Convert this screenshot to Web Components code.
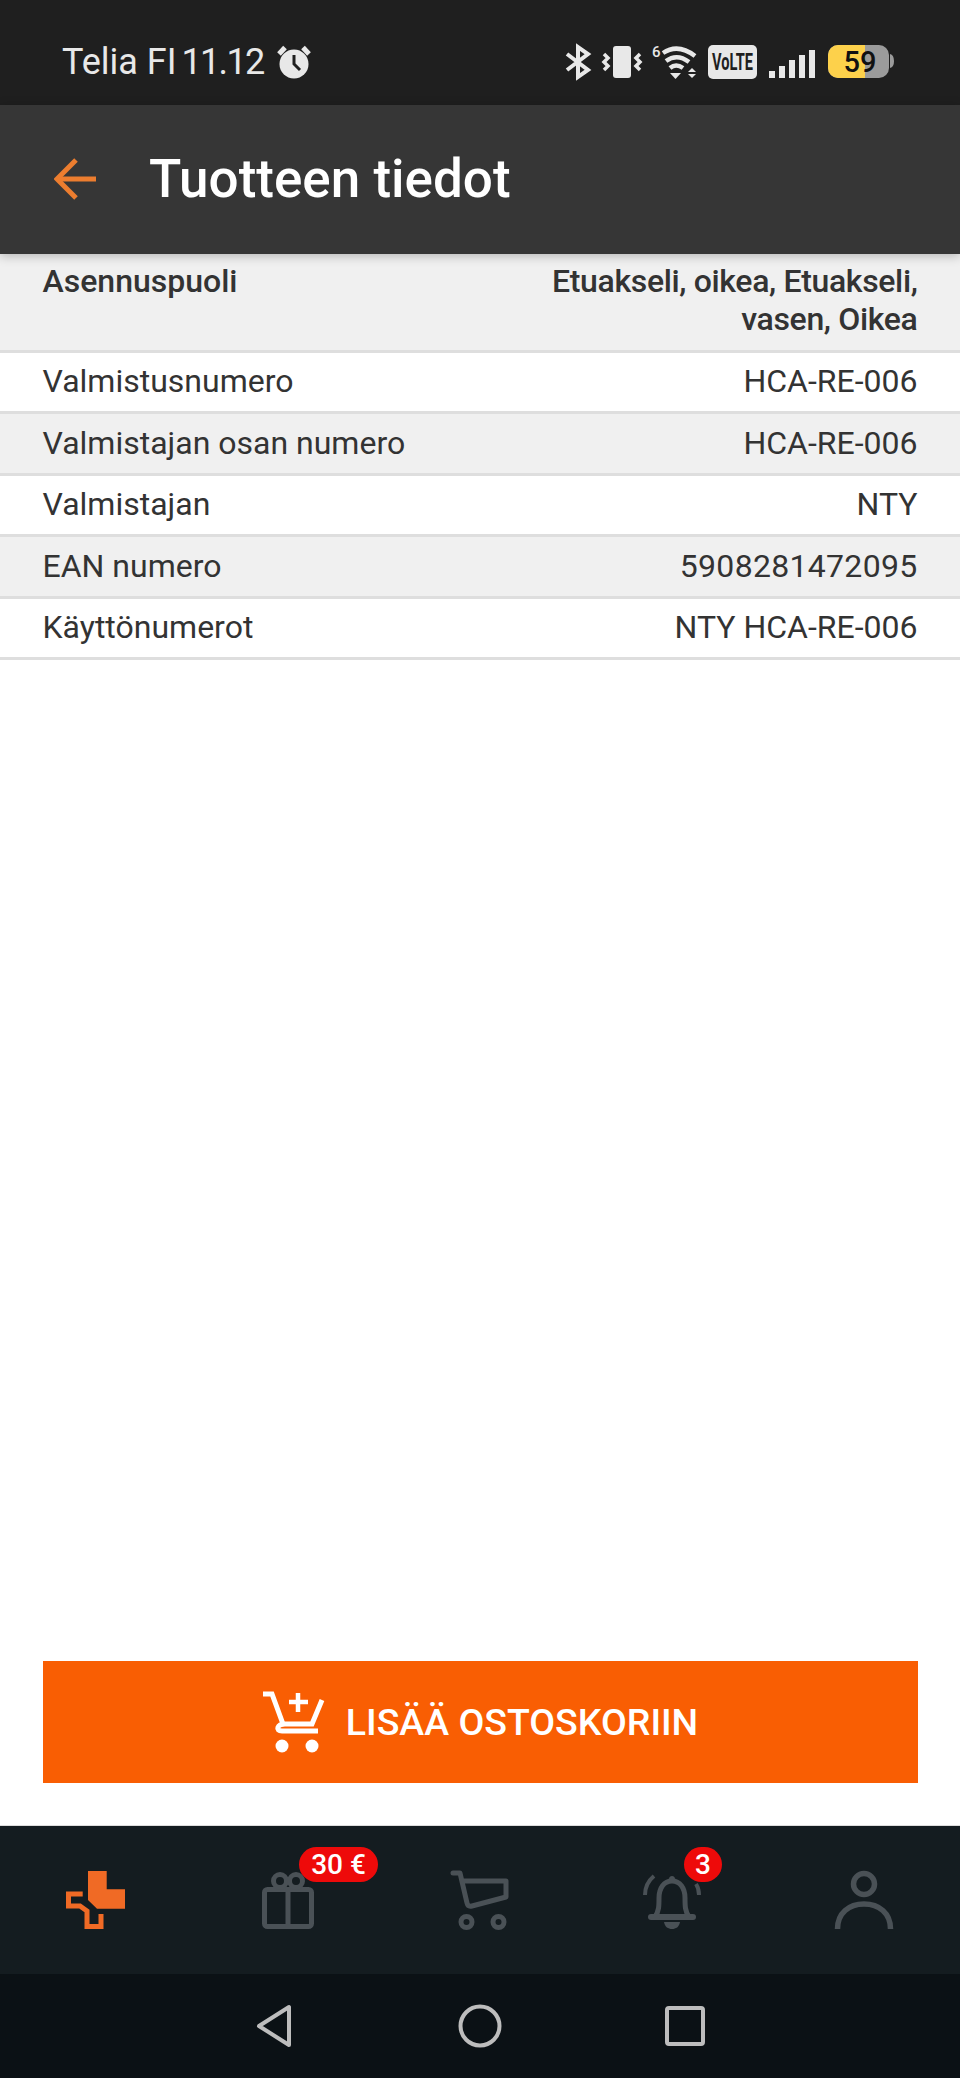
<!DOCTYPE html>
<html lang="fi">
<head>
<meta charset="utf-8">
<title>Tuotteen tiedot</title>
<style>
	html, body { margin: 0; padding: 0; background: #fff; }
	body { font-family: Roboto, "Liberation Sans", sans-serif; }
	#page { display: flex; flex-direction: column; height: 2078px; width: 960px; overflow: hidden; }
	.ean { letter-spacing: .3px; }
</style>
</head>
<body>
<div id="page">
	<status-bar></status-bar>
	<app-bar>Tuotteen tiedot</app-bar>
	<spec-table>
		<spec-row strong tall><span slot="label">Asennuspuoli</span>Etuakseli, oikea, Etuakseli,<br>vasen, Oikea</spec-row>
		<spec-row><span slot="label">Valmistusnumero</span>HCA-RE-006</spec-row>
		<spec-row alt><span slot="label">Valmistajan osan numero</span>HCA-RE-006</spec-row>
		<spec-row><span slot="label">Valmistajan</span>NTY</spec-row>
		<spec-row alt><span slot="label">EAN numero</span><span class="ean">5908281472095</span></spec-row>
		<spec-row><span slot="label">Käyttönumerot</span>NTY HCA-RE-006</spec-row>
	</spec-table>
	<add-to-cart>LISÄÄ OSTOSKORIIN</add-to-cart>
	<bottom-nav>
		<nav-item>
			<svg viewBox="0 0 60 60" width="60" height="60">
				<path fill="#f06a25" d="M22 1H40.7V19.3H59V38.7H31L22 30Z"/>
				<path fill="none" stroke="#f06a25" stroke-width="5" d="M16.7 24H2.5V36H14L21 41V56.5H35V44"/>
			</svg>
		</nav-item>
		<nav-item badge="30 €" badge-left="41" badge-width="79">
			<svg viewBox="0 0 60 60" width="60" height="60" fill="none" stroke="#4a5156" stroke-width="5">
				<rect x="6.5" y="19.5" width="47" height="37" rx="3"/>
				<path d="M30 19V57"/>
				<circle cx="22" cy="11" r="6.5"/>
				<circle cx="38" cy="11" r="6.5"/>
			</svg>
		</nav-item>
		<nav-item>
			<svg viewBox="0 0 60 60" width="60" height="60" fill="none" stroke="#4a5156" stroke-width="5">
				<path stroke-linecap="round" d="M3 3H10L17 33Q18 37 22 36L56 27V11H13" stroke-linejoin="round"/>
				<circle cx="16.5" cy="52" r="5.5"/>
				<circle cx="48.5" cy="52" r="5.5"/>
			</svg>
		</nav-item>
		<nav-item badge="3" badge-left="42" badge-width="38">
			<svg viewBox="0 0 60 60" width="60" height="60" fill="none" stroke="#4a5156" stroke-width="5">
				<path d="M13 47C17 41 17 36 17 28C17 18 22 11 30 11C38 11 43 18 43 28C43 36 43 41 47 47"/>
				<path stroke-linecap="round" stroke-width="6" d="M9 47H51"/>
				<path fill="#4a5156" stroke="none" d="M22 52H38C37 57 34 59 30 59C26 59 23 57 22 52Z"/>
				<path fill="#4a5156" stroke="none" d="M27 9C27 5 33 5 33 9Z"/>
				<path stroke-width="4" d="M3 25C3 17 6 11 12 6"/>
				<path stroke-width="4" d="M57 25C57 20 56 17 54 14"/>
			</svg>
		</nav-item>
		<nav-item>
			<svg viewBox="0 0 60 60" width="60" height="60" fill="none" stroke="#4a5156" stroke-width="5.5">
				<circle cx="30" cy="14" r="10.5"/>
				<path d="M3.5 59C3.5 43 15 34 30 34C45 34 56.500 43 56.500 59"/>
			</svg>
		</nav-item>
	</bottom-nav>
	<system-nav></system-nav>
</div>

<script>
class statusBar extends HTMLElement {

	constructor() {

		super();

		this.attachShadow( { mode: 'open' } ).innerHTML = `
			<style>
				:host {
					display: flex;
					align-items: center;
					flex: none;
					height: 105px;
					padding: 18px 66px 0 62px;
					box-sizing: border-box;
					background: #1f1f1f;
					color: #e8e8e8;
					font-family: Roboto, sans-serif;
					font-size: 36px;
				}
				.carrier { margin-right: 5px; }
				.time { margin-right: 14px; letter-spacing: -1.7px; }
				.left, .right { display: flex; align-items: center; }
				.right { margin-left: auto; }
				svg { display: block; overflow: visible; }
				.gap-9 { margin-left: 9px; }
				.gap-11 { margin-left: 11px; }
				.gap-12 { margin-left: 12px; }
				.gap-13 { margin-left: 13px; }
			</style>
			<div class="left">
				<span class="carrier">Telia FI</span>
				<span class="time">11.12</span>
				<svg width="34" height="34" viewBox="0 0 34 34">
					<circle cx="17" cy="19" r="14.5" fill="#e8e8e8"/>
					<path d="M17 10V19L23 25" fill="none" stroke="#1f1f1f" stroke-width="3"/>
					<path d="M2 9L8 2.500" stroke="#e8e8e8" stroke-width="5" fill="none"/>
					<path d="M32 9L26 2.500" stroke="#e8e8e8" stroke-width="5" fill="none"/>
				</svg>
			</div>
			<div class="right">
				<svg width="26" height="34" viewBox="0 0 26 34" fill="none" stroke="#e8e8e8" stroke-width="4">
					<path d="M2 9L23 25L13 32V2L23 9L2 25"/>
				</svg>
				<svg class="gap-11" width="41" height="34" viewBox="0 0 41 34" fill="none" stroke="#e8e8e8" stroke-width="3.500">
					<rect x="11" y="1" width="18" height="32" rx="3" fill="#e8e8e8" stroke="none"/>
					<path d="M2 9L6 13L2 17L6 21L2 25"/>
					<path d="M38 9L34 13L38 17L34 21L38 25"/>
				</svg>
				<svg class="gap-9" width="45" height="34" viewBox="0 0 45 34" fill="none" stroke="#e8e8e8" stroke-width="4.500">
					<path d="M11 8Q26 -2 43 11"/>
					<path d="M14 16Q25 8 37 17"/>
					<path d="M18 23Q24 18 31 23"/>
					<path d="M18 28H29L23.500 34Z" fill="#e8e8e8" stroke="none"/>
					<path d="M36 27L40 23L44 27Z M36 29L40 33L44 29Z" fill="#e8e8e8" stroke="none"/>
					<text x="0" y="12" fill="#e8e8e8" stroke="none" font-family="Roboto, sans-serif" font-size="15" font-weight="500">6</text>
				</svg>
				<svg class="gap-11" width="49" height="34" viewBox="0 0 49 34">
					<rect width="49" height="34" rx="5" fill="#e8e8e8"/>
					<text x="4" y="25" textLength="41" lengthAdjust="spacingAndGlyphs" font-family="Roboto, sans-serif" font-size="23" font-weight="700" fill="#1f1f1f">VoLTE</text>
				</svg>
				<svg class="gap-12" width="46" height="34" viewBox="0 0 46 34" fill="#e8e8e8">
					<rect x="0" y="26" width="6" height="7"/>
					<rect x="10" y="21" width="6" height="12"/>
					<rect x="20" y="15" width="6" height="18"/>
					<rect x="30" y="10" width="6" height="23"/>
					<rect x="40" y="5" width="6" height="28"/>
				</svg>
				<svg class="gap-13" width="66" height="34" viewBox="0 0 66 34">
					<rect x="0" y="0" width="61" height="33" rx="10" fill="#9b9b9b"/>
					<path d="M37 0H10A10 10 0 0 0 0 10V23A10 10 0 0 0 10 33H37Z" fill="#fdd14b"/>
					<path d="M62 9Q66 10 66 16Q66 22 62 23Z" fill="#9b9b9b"/>
					<text x="32" y="27" text-anchor="middle" font-family="Roboto, sans-serif" font-size="29" font-weight="500" fill="#111">59</text>
				</svg>
			</div>
		`;

	}

}

window.customElements.define( 'status-bar', statusBar );

class appBar extends HTMLElement {

	constructor() {

		super();

		this.attachShadow( { mode: 'open' } ).innerHTML = `
			<style>
				:host {
					display: flex;
					align-items: center;
					flex: none;
					position: relative;
					z-index: 1;
					height: 149px;
					padding: 0 0 2px 54px;
					box-sizing: border-box;
					background: #363636;
					color: #fff;
					font-family: Roboto, sans-serif;
					font-size: 53px;
					font-weight: 500;
					box-shadow: 0 2px 10px rgba(0,0,0,.25);
				}
				svg { display: block; margin-right: 53px; }
			</style>
			<svg width="42" height="42" viewBox="0 0 42 42" fill="none" stroke="#ec7d2f" stroke-width="5">
				<path d="M42 21H4"/>
				<path d="M22 2L3 21L22 40"/>
			</svg>
			<slot></slot>
		`;

	}

}

window.customElements.define( 'app-bar', appBar );

class specTable extends HTMLElement {

	constructor() {

		super();

		this.attachShadow( { mode: 'open' } ).innerHTML = `
			<style>
				:host {
					display: block;
					flex: 1;
					min-height: 0;
				}
			</style>
			<slot></slot>
		`;

	}

}

window.customElements.define( 'spec-table', specTable );

class specRow extends HTMLElement {

	constructor() {

		super();

		this.attachShadow( { mode: 'open' } ).innerHTML = `
			<style>
				:host {
					display: flex;
					justify-content: space-between;
					box-sizing: border-box;
					height: 61.5px;
					padding: 9.5px 42.5px 0;
					background: #fff;
					border-bottom: 3px solid #dedede;
					color: #333;
					font-family: Roboto, sans-serif;
					font-size: 32px;
					line-height: 38px;
				}
				:host([alt]) { background: #f0f0f0; }
				:host([strong]) { font-weight: 500; background: #f0f0f0; }
				:host([strong]) .value { letter-spacing: -.35px; }
				:host([tall]) { height: 98.5px; padding-top: 8px; }
				.value { text-align: right; }
			</style>
			<div class="label"><slot name="label"></slot></div>
			<div class="value"><slot></slot></div>
		`;

	}

}

window.customElements.define( 'spec-row', specRow );

class addToCart extends HTMLElement {

	constructor() {

		super();

		this.attachShadow( { mode: 'open' } ).innerHTML = `
			<style>
				:host {
					display: block;
					flex: none;
					padding: 0 42.5px 42px;
				}
				button {
					display: flex;
					align-items: center;
					justify-content: center;
					width: 100%;
					height: 122px;
					padding: 0;
					border: 0;
					background: #f95e03;
					color: #fff;
					font-family: Roboto, sans-serif;
					font-size: 37.5px;
					font-weight: 500;
				}
				svg { display: block; margin-right: 20px; }
			</style>
			<button>
				<svg width="64" height="62" viewBox="0 0 64 62" fill="none" stroke="#fff" stroke-width="5">
					<path d="M1 3H10L21 33"/>
					<path d="M60 9L50 33H23C15 33 13 40 20 40H56"/>
					<path d="M36 2V21M27 11H46" stroke-width="4.500"/>
					<circle cx="20" cy="55" r="6.500" fill="#fff" stroke="none"/>
					<circle cx="50" cy="55" r="6.500" fill="#fff" stroke="none"/>
				</svg>
				<slot></slot>
			</button>
		`;

	}

}

window.customElements.define( 'add-to-cart', addToCart );

class bottomNav extends HTMLElement {

	constructor() {

		super();

		this.attachShadow( { mode: 'open' } ).innerHTML = `
			<style>
				:host {
					display: grid;
					grid-template-columns: repeat(5, 1fr);
					flex: none;
					height: 149px;
					background: #141c20;
					border-top: 1px solid #ddd;
					box-sizing: border-box;
				}
			</style>
			<slot></slot>
		`;

	}

}

window.customElements.define( 'bottom-nav', bottomNav );

class navItem extends HTMLElement {

	constructor() {

		super();

		const root = this.attachShadow( { mode: 'open' } );

		root.innerHTML = `
			<style>
				:host {
					display: flex;
					align-items: center;
					justify-content: center;
				}
				.icon { position: relative; width: 60px; height: 60px; }
				::slotted(svg) { display: block; }
				.badge {
					position: absolute;
					top: -23px;
					height: 35px;
					border-radius: 18px;
					background: #ee0a0a;
					color: #fff;
					font-family: Roboto, sans-serif;
					font-size: 28px;
					font-weight: 500;
					line-height: 35px;
					text-align: center;
				}
			</style>
			<div class="icon"><slot></slot></div>
		`;

		// Badge only when the item has something to count
		if ( this.hasAttribute( 'badge' ) ) {
			const badge = document.createElement( 'div' );
			badge.className = 'badge';
			badge.textContent = this.getAttribute( 'badge' );
			badge.style.left = this.getAttribute( 'badge-left' ) + 'px';
			badge.style.width = this.getAttribute( 'badge-width' ) + 'px';
			root.querySelector( '.icon' ).appendChild( badge );
		}

	}

}

window.customElements.define( 'nav-item', navItem );

class systemNav extends HTMLElement {

	constructor() {

		super();

		this.attachShadow( { mode: 'open' } ).innerHTML = `
			<style>
				:host {
					display: flex;
					align-items: center;
					justify-content: center;
					gap: 161px;
					flex: none;
					height: 104px;
					background: #0b1115;
				}
				svg { display: block; }
			</style>
			<svg width="44" height="44" viewBox="0 0 44 44" fill="none" stroke="#bdbdbd" stroke-width="4" stroke-linejoin="round">
				<path d="M6 22L36 3V41Z"/>
			</svg>
			<svg width="44" height="44" viewBox="0 0 44 44" fill="none" stroke="#bdbdbd" stroke-width="4">
				<circle cx="22" cy="22" r="19.500"/>
			</svg>
			<svg width="44" height="44" viewBox="0 0 44 44" fill="none" stroke="#bdbdbd" stroke-width="4" stroke-linejoin="round">
				<rect x="4" y="4" width="36" height="36" rx="2"/>
			</svg>
		`;

	}

}

window.customElements.define( 'system-nav', systemNav );
</script>
</body>
</html>
